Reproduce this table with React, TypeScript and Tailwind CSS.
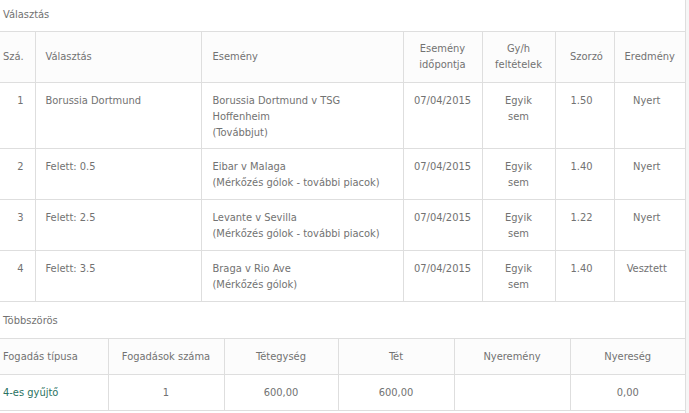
import React from "react";

const font = { fontFamily: '"DejaVu Sans Condensed", "Liberation Sans", sans-serif' };

type Sel = {
  no: number;
  pick: string;
  event: string[];
  date: string;
  odds: string;
  result: string;
};

const selections: Sel[] = [
  {
    no: 1,
    pick: "Borussia Dortmund",
    event: ["Borussia Dortmund v TSG", "Hoffenheim", "(Továbbjut)"],
    date: "07/04/2015",
    odds: "1.50",
    result: "Nyert",
  },
  {
    no: 2,
    pick: "Felett: 0.5",
    event: ["Eibar v Malaga", "(Mérkőzés gólok - további piacok)"],
    date: "07/04/2015",
    odds: "1.40",
    result: "Nyert",
  },
  {
    no: 3,
    pick: "Felett: 2.5",
    event: ["Levante v Sevilla", "(Mérkőzés gólok - további piacok)"],
    date: "07/04/2015",
    odds: "1.22",
    result: "Nyert",
  },
  {
    no: 4,
    pick: "Felett: 3.5",
    event: ["Braga v Rio Ave", "(Mérkőzés gólok)"],
    date: "07/04/2015",
    odds: "1.40",
    result: "Vesztett",
  },
];

const multiHead = ["Fogadás típusa", "Fogadások száma", "Tétegység", "Tét", "Nyeremény", "Nyereség"];

export default function App() {
  return (
    <div className="min-h-[413px] bg-[#f6f6f6]" style={font}>
      <div className="w-[686px] min-h-[413px] bg-white border-r border-[#dedede] text-[11px] leading-4 text-[#727272]">
        {/* Választás */}
        <div className="h-[31px] px-[3px] pt-[7px]">Választás</div>
        <table className="w-[685px] table-fixed border-collapse">
          <colgroup>
            <col className="w-[35px]" />
            <col className="w-[166px]" />
            <col className="w-[202px]" />
            <col className="w-[79px]" />
            <col className="w-[73px]" />
            <col className="w-[59px]" />
            <col className="w-[71px]" />
          </colgroup>
          <thead>
            <tr className="h-[51px] border-y border-[#dedede] bg-[#fcfcfc]">
              <th className="px-[3px] text-left font-normal">Szá.</th>
              <th className="border-l border-[#dedede] px-[10px] text-left font-normal">Választás</th>
              <th className="border-l border-[#dedede] px-[11px] text-left font-normal">Esemény</th>
              <th className="border-l border-[#dedede] text-center font-normal">
                Esemény
                <br />
                időpontja
              </th>
              <th className="border-l border-[#dedede] text-center font-normal">
                Gy/h
                <br />
                feltételek
              </th>
              <th className="border-l border-[#dedede] pl-[4px] text-center font-normal">Szorzó</th>
              <th className="border-l border-[#dedede] text-center font-normal">Eredmény</th>
            </tr>
          </thead>
          <tbody>
            {selections.map((s) => {
              const pad = s.event.length > 2 ? "pt-[10px] pb-[7px]" : "pt-[10px] pb-[8px]";
              return (
                <tr key={s.no} className="border-b border-[#dedede] align-top">
                  <td className={`${pad} pr-[11px] text-right`}>{s.no}</td>
                  <td className={`${pad} border-l border-[#dedede] px-[10px]`}>{s.pick}</td>
                  <td className={`${pad} border-l border-[#dedede] px-[11px]`}>
                    {s.event.map((l) => (
                      <div key={l} className="whitespace-nowrap">
                        {l}
                      </div>
                    ))}
                  </td>
                  <td className={`${pad} border-l border-[#dedede] text-center`}>{s.date}</td>
                  <td className={`${pad} border-l border-[#dedede] text-center`}>
                    Egyik
                    <br />
                    sem
                  </td>
                  <td className={`${pad} border-l border-[#dedede] pr-[6px] text-center`}>{s.odds}</td>
                  <td className={`${pad} border-l border-[#dedede] pr-[6px] text-center`}>{s.result}</td>
                </tr>
              );
            })}
          </tbody>
        </table>

        {/* Többszörös */}
        <div className="h-[36px] px-[3px] pt-[11px]">Többszörös</div>
        <table className="w-[685px] table-fixed border-collapse">
          <colgroup>
            <col className="w-[108px]" />
            <col className="w-[116px]" />
            <col className="w-[114px]" />
            <col className="w-[116px]" />
            <col className="w-[116px]" />
            <col className="w-[115px]" />
          </colgroup>
          <thead>
            <tr className="border-y border-[#dedede] bg-[#fcfcfc]">
              {multiHead.map((h, i) => (
                <th
                  key={h}
                  className={
                    i === 0
                      ? "pt-[10px] pb-[9px] px-[3px] text-left font-normal"
                      : "border-l border-[#dedede] pt-[10px] pb-[9px] text-center font-normal"
                  }
                >
                  {h}
                </th>
              ))}
            </tr>
          </thead>
          <tbody>
            <tr className="border-b border-[#dedede]">
              <td className="pt-[10px] pb-[9px] px-[3px]">
                <a className="text-[#2a7262]">4-es gyűjtő</a>
              </td>
              <td className="border-l border-[#dedede] pt-[10px] pb-[9px] text-center">1</td>
              <td className="border-l border-[#dedede] pt-[10px] pb-[9px] text-center">600,00</td>
              <td className="border-l border-[#dedede] pt-[10px] pb-[9px] text-center">600,00</td>
              <td className="border-l border-[#dedede] pt-[10px] pb-[9px] text-center"></td>
              <td className="border-l border-[#dedede] pt-[10px] pb-[9px] text-center">0,00</td>
            </tr>
          </tbody>
        </table>
      </div>
    </div>
  );
}
